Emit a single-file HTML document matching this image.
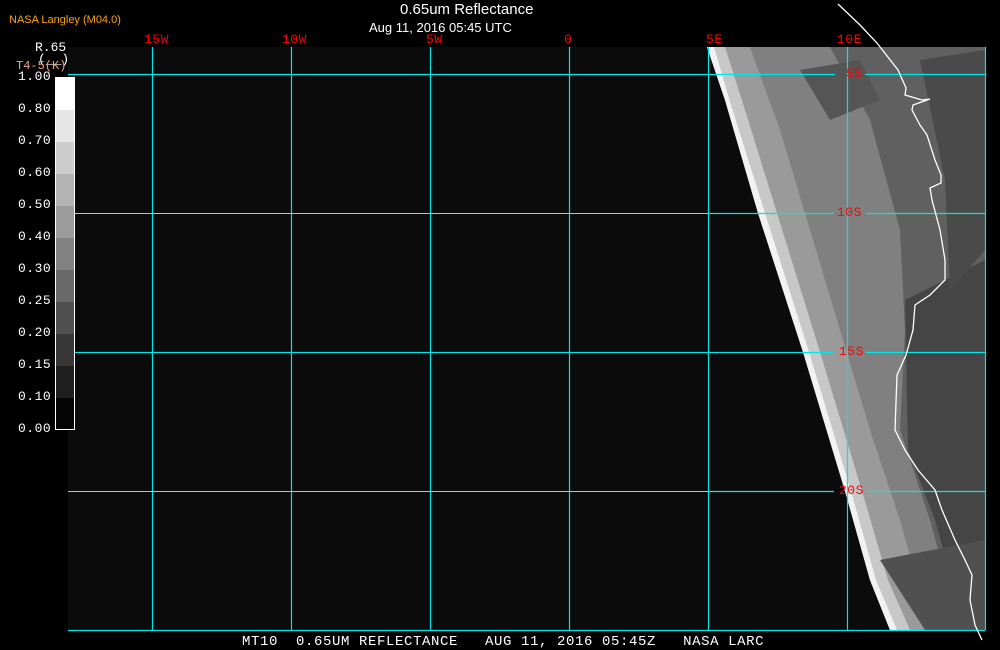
<!DOCTYPE html>
<html><head><style>
body{margin:0;background:#000;width:1000px;height:650px;overflow:hidden;position:relative;font-family:"Liberation Mono",monospace}
.t{position:absolute;white-space:pre}
.r{position:absolute;white-space:pre;font:13px 'Liberation Mono',monospace;color:#f00;letter-spacing:0.5px}
</style></head><body>
<svg width="1000" height="650" style="position:absolute;left:0;top:0">
<rect x="68" y="47" width="917" height="583" fill="#0b0b0b"/>
<polygon points="707,47 985,47 985,630 890,630 870,580 845,491 803,352 758,213 725,100" fill="#606060"/>
<polygon points="707,47 830,47 870,120 900,230 905,330 900,430 930,520 960,630 890,630 870,580 845,491 803,352 758,213 725,100" fill="#808080"/>
<polygon points="707,47 750,47 780,130 810,230 840,330 870,430 900,520 930,630 890,630 870,580 845,491 803,352 758,213 725,100" fill="#9a9a9a"/>
<polygon points="707,47 725,47 745,110 777,213 820,352 862,491 888,580 910,630 890,630 870,580 845,491 803,352 758,213 725,100" fill="#c8c8c8"/>
<polygon points="707,47 714,47 731,105 765,213 809,352 851,491 876,580 897,630 890,630 870,580 845,491 803,352 758,213 725,100" fill="#f2f2f2"/>
<polygon points="905,300 985,260 985,630 965,630 935,520 908,450" fill="#454545"/>
<polygon points="920,60 985,50 985,250 950,290 945,180" fill="#4a4a4a"/>
<polygon points="880,560 985,540 985,630 925,630" fill="#505050"/>
<polygon points="800,70 860,60 880,100 830,120" fill="#555"/>
<g stroke="#00e5e5" stroke-width="1.2">
<line x1="68" y1="74.5" x2="835" y2="74.5"/><line x1="865" y1="74.5" x2="985" y2="74.5"/>
<line x1="68" y1="352.5" x2="834" y2="352.5"/><line x1="866" y1="352.5" x2="985" y2="352.5"/>
<line x1="68" y1="630.5" x2="985" y2="630.5"/>
<line x1="152.5" y1="47" x2="152.5" y2="630"/>
<line x1="430.5" y1="47" x2="430.5" y2="630"/>
<line x1="708.5" y1="47" x2="708.5" y2="630"/>
<line x1="985.5" y1="47" x2="985.5" y2="630"/>
<line x1="708" y1="213.5" x2="834" y2="213.5"/><line x1="866" y1="213.5" x2="985" y2="213.5"/>
<line x1="708" y1="491.5" x2="834" y2="491.5"/><line x1="866" y1="491.5" x2="985" y2="491.5"/>
<line x1="847.5" y1="47" x2="847.5" y2="630"/>
<line x1="569.5" y1="47" x2="569.5" y2="630"/>
<line x1="291.5" y1="47" x2="291.5" y2="630"/>
</g>
<g stroke="#bfbfbf" stroke-width="1">
<line x1="68" y1="213.5" x2="708" y2="213.5"/>
<line x1="68" y1="491.5" x2="708" y2="491.5"/>
</g>
<polyline fill="none" stroke="#fff" stroke-width="1.3" points="838,4 860,25 877,43 898,70 906,88 905,95 922,100 930,99 913,105 912,110 920,125 927,135 935,160 941,175 941,183 930,188 932,200 940,230 945,260 945,280 930,295 915,305 913,330 906,355 897,375 895,430 905,450 918,470 935,490 942,510 955,540 965,560 972,575 970,600 975,625 982,640"/>
<rect x="55.5" y="77.5" width="19" height="352" fill="#000" stroke="#fff"/>
<rect x="56" y="78" width="18" height="32" fill="#fff"/>
<rect x="56" y="110" width="18" height="32" fill="#e6e6e6"/>
<rect x="56" y="142" width="18" height="32" fill="#cdcdcd"/>
<rect x="56" y="174" width="18" height="32" fill="#b4b4b4"/>
<rect x="56" y="206" width="18" height="32" fill="#9b9b9b"/>
<rect x="56" y="238" width="18" height="32" fill="#828282"/>
<rect x="56" y="270" width="18" height="32" fill="#696969"/>
<rect x="56" y="302" width="18" height="32" fill="#505050"/>
<rect x="56" y="334" width="18" height="32" fill="#373737"/>
<rect x="56" y="366" width="18" height="32" fill="#1e1e1e"/>
<rect x="56" y="398" width="18" height="31" fill="#050505"/>
</svg>
<div class="t" style="left:9px;top:14px;font:11px 'Liberation Sans',sans-serif;color:#ffa500">NASA Langley (M04.0)</div>
<div class="t" style="left:400px;top:1px;font:15px 'Liberation Sans',sans-serif;color:#fff">0.65um Reflectance</div>
<div class="t" style="left:369px;top:20px;font:13px 'Liberation Sans',sans-serif;color:#fff">Aug 11, 2016 05:45 UTC</div>
<div class="t" style="left:35px;top:40px;font:13px 'Liberation Mono',monospace;color:#fff">R.65</div>
<div class="t" style="left:38px;top:52px;font:13px 'Liberation Mono',monospace;color:#fff">(__)</div>
<div class="t" style="left:16px;top:59px;font:12px 'Liberation Mono',monospace;color:#f4a080">T4-5(K)</div>
<div class="t" style="left:18px;top:61px;font:13px/32px 'Liberation Mono',monospace;color:#fff;letter-spacing:0.5px">1.00
0.80
0.70
0.60
0.50
0.40
0.30
0.25
0.20
0.15
0.10
0.00</div>
<div class="r" style="left:144px;top:32px">15W</div>
<div class="r" style="left:282px;top:32px">10W</div>
<div class="r" style="left:426px;top:32px">5W</div>
<div class="r" style="left:564px;top:32px">0</div>
<div class="r" style="left:706px;top:32px">5E</div>
<div class="r" style="left:837px;top:32px">10E</div>
<div class="r" style="left:846px;top:66px">5S</div>
<div class="r" style="left:837px;top:205px">10S</div>
<div class="r" style="left:839px;top:344px">15S</div>
<div class="r" style="left:839px;top:483px">20S</div>
<div class="t" style="left:242px;top:634px;font:14px 'Liberation Mono',monospace;color:#fff;letter-spacing:0.6px">MT10  0.65UM REFLECTANCE   AUG 11, 2016 05:45Z   NASA LARC</div>
</body></html>
